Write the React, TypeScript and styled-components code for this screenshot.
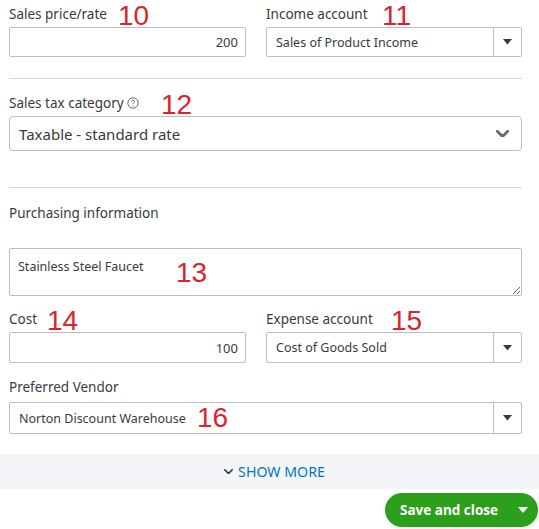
import React from "react";
import styled, { createGlobalStyle } from "styled-components";

const Global = createGlobalStyle`
  html, body { margin: 0; padding: 0; background: #fff; }
  body { width: 539px; font-family: "Noto Sans", "Open Sans", Arial, sans-serif; color: #393a3d; overflow: hidden; }
  * { box-sizing: border-box; }
`;

const Page = styled.div`
  width: 539px;
  height: 529px;
  display: flex;
  flex-direction: column;
  overflow: hidden;
`;

const Body = styled.div`
  padding: 0 17px 0 9px;
  display: flex;
  flex-direction: column;
`;

const Row = styled.div<{ $mt?: number }>`
  display: grid;
  grid-template-columns: 237px 256px;
  column-gap: 20px;
  margin-top: ${(p) => p.$mt ?? 0}px;
`;

const Field = styled.div<{ $mt?: number }>`
  display: flex;
  flex-direction: column;
  margin-top: ${(p) => p.$mt ?? 0}px;
`;

const Label = styled.div<{ $gap?: number }>`
  position: relative;
  font-size: 13.5px;
  line-height: 20px;
  height: 20px;
  color: #393a3d;
  margin-bottom: ${(p) => p.$gap ?? 3}px;
  display: flex;
  align-items: center;
  white-space: nowrap;
`;

const Mark = styled.span<{ $x: number; $y: number }>`
  position: absolute;
  left: ${(p) => p.$x}px;
  top: ${(p) => p.$y}px;
  font-family: "Liberation Sans", Arial, sans-serif;
  font-size: 28px;
  line-height: normal;
  color: #d9232d;
  font-weight: 400;
  white-space: nowrap;
`;

const Help = styled.span`
  display: inline-flex;
  margin-left: 3px;
  color: #6b6c72;
`;

const TextBox = styled.div<{ $h: number }>`
  height: ${(p) => p.$h}px;
  border: 1px solid #babec5;
  border-radius: 2px;
  display: flex;
  align-items: center;
  justify-content: flex-end;
  padding-right: 7px;
  font-size: 13px;
  color: #393a3d;
`;

const Combo = styled.div<{ $h: number }>`
  height: ${(p) => p.$h}px;
  border: 1px solid #babec5;
  border-radius: 2px;
  display: flex;
  align-items: stretch;
`;

const ComboText = styled.div`
  flex: 1;
  display: flex;
  align-items: center;
  padding-left: 9px;
  font-size: 12.5px;
  color: #393a3d;
  position: relative;
  white-space: nowrap;
`;

const ComboBtn = styled.div`
  width: 28px;
  border-left: 1px solid #babec5;
  display: flex;
  align-items: center;
  justify-content: center;
`;

const BigSelect = styled.div`
  height: 35px;
  border: 1px solid #babec5;
  border-radius: 4px;
  display: flex;
  align-items: center;
  justify-content: space-between;
  padding: 0 12px 0 9px;
  font-size: 15px;
  color: #393a3d;
`;

const Divider = styled.hr<{ $mt: number }>`
  border: 0;
  border-top: 1px solid #d4d7dc;
  margin: ${(p) => p.$mt}px 0 0 0;
  width: 513px;
`;

const Heading = styled.div<{ $mt: number }>`
  font-size: 13.5px;
  line-height: 20px;
  margin-top: ${(p) => p.$mt}px;
  color: #393a3d;
`;

const AreaWrap = styled.div`
  position: relative;
  margin-top: 25px;
`;

const Area = styled.textarea`
  display: block;
  width: 513px;
  height: 48px;
  border: 1px solid #babec5;
  border-radius: 2px;
  padding: 9px 8px;
  font-family: "Noto Sans", "Open Sans", sans-serif;
  font-size: 12.5px;
  color: #393a3d;
  outline: none;
  resize: both;
`;

const Band = styled.div`
  margin-top: 20px;
  height: 35px;
  background: #f4f5f8;
  display: flex;
  align-items: center;
  justify-content: center;
  gap: 5px;
  color: #0077c5;
  font-size: 14.2px;
  padding-left: 10px;
`;

const Footer = styled.div`
  display: flex;
  justify-content: flex-end;
  margin-top: 4px;
  padding-right: 1px;
`;

const SaveBtn = styled.div`
  width: 153px;
  height: 34px;
  border-radius: 17px;
  background: #2ca01c;
  color: #fff;
  display: flex;
  align-items: center;
  justify-content: space-between;
  padding: 0 10px 0 15px;
  font-family: "Open Sans", "Noto Sans", sans-serif;
  font-weight: 700;
  font-size: 13.5px;
`;

const Caret = ({ size = 9, color = "#393a3d" }: { size?: number; color?: string }) => (
  <svg width={size} height={size * 0.6} viewBox="0 0 10 6">
    <path d="M0 0 L10 0 L5 6 Z" fill={color} />
  </svg>
);

const Chevron = ({ w, color, sw }: { w: number; color: string; sw: number }) => (
  <svg width={w} height={w * 0.6} viewBox="0 0 10 6">
    <path d="M1 1 L5 5 L9 1" fill="none" stroke={color} strokeWidth={sw} strokeLinecap="round" strokeLinejoin="round" />
  </svg>
);

export default function App() {
  return (
    <Page>
      <Global />
      <Body>
        <Row $mt={4}>
          <Field>
            <Label>
              Sales price/rate<Mark $x={109} $y={-4}>10</Mark>
            </Label>
            <TextBox $h={30}>200</TextBox>
          </Field>
          <Field>
            <Label>
              Income account<Mark $x={116} $y={-4}>11</Mark>
            </Label>
            <Combo $h={30}>
              <ComboText>Sales of Product Income</ComboText>
              <ComboBtn>
                <Caret />
              </ComboBtn>
            </Combo>
          </Field>
        </Row>
        <Divider $mt={21} />
        <Field $mt={14}>
          <Label>
            Sales tax category
            <Help>
              <svg width="12" height="12" viewBox="0 0 12 12">
                <circle cx="6" cy="6" r="5.2" fill="none" stroke="#6b6c72" strokeWidth="1" />
                <path d="M4.5 4.7 a1.5 1.5 0 1 1 2.1 1.3 c-0.5 0.3 -0.6 0.5 -0.6 1.1" fill="none" stroke="#6b6c72" strokeWidth="1" />
                <circle cx="6" cy="8.8" r="0.6" fill="#6b6c72" />
              </svg>
            </Help>
            <Mark $x={152} $y={-4}>12</Mark>
          </Label>
          <BigSelect>
            <span>Taxable - standard rate</span>
            <Chevron w={13} color="#6b6c72" sw={2.2} />
          </BigSelect>
        </Field>
        <Divider $mt={36} />
        <Heading $mt={15}>Purchasing information</Heading>
        <AreaWrap>
          <Area defaultValue="Stainless Steel Faucet" readOnly />
          <Mark $x={167} $y={9}>13</Mark>
        </AreaWrap>
        <Row $mt={13}>
          <Field>
            <Label>
              Cost<Mark $x={38} $y={-4}>14</Mark>
            </Label>
            <TextBox $h={31}>100</TextBox>
          </Field>
          <Field>
            <Label>
              Expense account<Mark $x={125} $y={-4}>15</Mark>
            </Label>
            <Combo $h={31}>
              <ComboText>Cost of Goods Sold</ComboText>
              <ComboBtn>
                <Caret />
              </ComboBtn>
            </Combo>
          </Field>
        </Row>
        <Field $mt={14}>
          <Label $gap={5}>Preferred Vendor</Label>
          <Combo $h={32}>
            <ComboText>
              Norton Discount Warehouse
              <Mark $x={187} $y={-1}>16</Mark>
            </ComboText>
            <ComboBtn>
              <Caret />
            </ComboBtn>
          </Combo>
        </Field>
      </Body>
      <Band>
        <Chevron w={9} color="#393a3d" sw={1.8} />
        <span>SHOW MORE</span>
      </Band>
      <Footer>
        <SaveBtn>
          <span>Save and close</span>
          <Caret size={10} color="#fff" />
        </SaveBtn>
      </Footer>
    </Page>
  );
}
